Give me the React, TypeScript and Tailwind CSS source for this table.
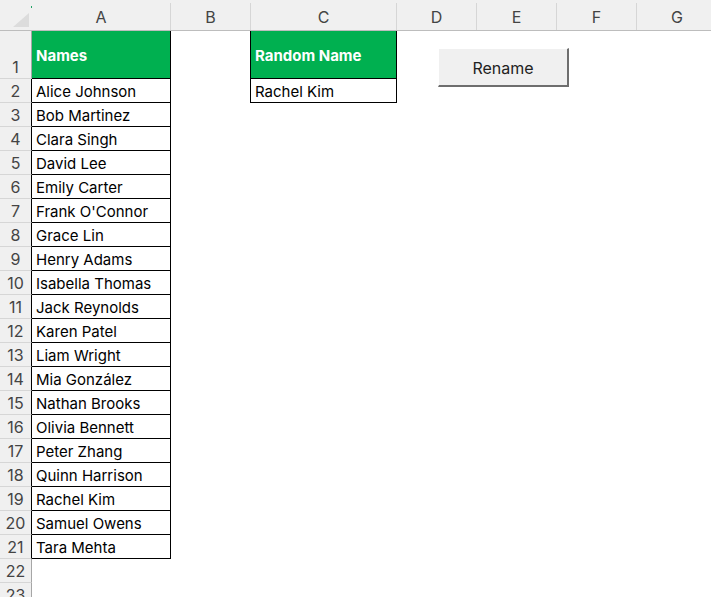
import React from 'react';

const names = [
  'Alice Johnson',
  'Bob Martinez',
  'Clara Singh',
  'David Lee',
  'Emily Carter',
  "Frank O'Connor",
  'Grace Lin',
  'Henry Adams',
  'Isabella Thomas',
  'Jack Reynolds',
  'Karen Patel',
  'Liam Wright',
  'Mia González',
  'Nathan Brooks',
  'Olivia Bennett',
  'Peter Zhang',
  'Quinn Harrison',
  'Rachel Kim',
  'Samuel Owens',
  'Tara Mehta',
];

const font = { fontFamily: 'Inter, "Liberation Sans", sans-serif' };

const App: React.FC = () => {
  const rows = Array.from({ length: 23 }, (_, i) => i + 1);

  return (
    <div className="relative w-[711px] h-[597px] overflow-hidden bg-white text-black" style={font}>
      {/* column headers */}
      <div className="flex h-[31px] bg-[#f0f0f0] border-b border-[#bdbdbd] text-[16px] text-[#444] pt-[3px]">
        <div className="relative w-[32px] shrink-0">
          <svg className="absolute left-0 top-[-3px]" width="32" height="30">
            <polygon points="13,27 29,27 29,13" fill="#dcdcdc" />
            <rect x="31" y="6" width="2" height="2" fill="#21a366" />
          </svg>
        </div>
        <div className="w-[139px] shrink-0 flex items-center justify-center border-r border-[#d6d6d6]">A</div>
        <div className="w-[80px] shrink-0 flex items-center justify-center border-r border-[#d6d6d6]">B</div>
        <div className="w-[146px] shrink-0 flex items-center justify-center border-r border-[#d6d6d6]">C</div>
        <div className="w-[80px] shrink-0 flex items-center justify-center border-r border-[#d6d6d6]">D</div>
        <div className="w-[80px] shrink-0 flex items-center justify-center border-r border-[#d6d6d6]">E</div>
        <div className="w-[80px] shrink-0 flex items-center justify-center border-r border-[#d6d6d6]">F</div>
        <div className="w-[80px] shrink-0 flex items-center justify-center">G</div>
      </div>

      {/* body */}
      {rows.map((r) => {
        const first = r === 1;
        const inA = r <= 21;
        const inC = r <= 2;
        return (
          <div key={r} className={`flex ${first ? 'h-[48px]' : 'h-[24px]'}`}>
            <div
              className={`w-[32px] shrink-0 bg-[#f0f0f0] border-b border-[#d6d6d6] border-r ${
                inA && !first ? 'border-r-black' : 'border-r-[#a6a6a6]'
              } flex items-end justify-center text-[16px] text-[#444] leading-[22px]`}
            >
              {r}
            </div>
            {inA ? (
              <div
                className={`w-[139px] shrink-0 border-r border-b border-black pl-[4px] pt-[3px] flex items-center text-[15px] ${
                  first ? 'bg-[#00b050] text-white font-bold' : ''
                }`}
              >
                {first ? 'Names' : names[r - 2]}
              </div>
            ) : (
              <div className="w-[139px] shrink-0" />
            )}
            <div className="w-[79px] shrink-0" />
            {inC ? (
              <div
                className={`w-[147px] shrink-0 border-l border-r border-b border-black pl-[4px] pt-[3px] flex items-center text-[15px] ${
                  first ? 'bg-[#00b050] text-white font-bold' : ''
                }`}
              >
                {first ? 'Random Name' : 'Rachel Kim'}
              </div>
            ) : (
              <div className="w-[147px] shrink-0" />
            )}
          </div>
        );
      })}

      {/* form control button */}
      <button className="absolute left-[438px] top-[48px] w-[131px] h-[39px] pt-[2px] bg-[#f0f0f0] border-t border-l border-t-white border-l-white border-r-2 border-b-2 border-r-[#6e6e6e] border-b-[#6e6e6e] text-[16px] text-[#222]">
        Rename
      </button>
    </div>
  );
};

export default App;
